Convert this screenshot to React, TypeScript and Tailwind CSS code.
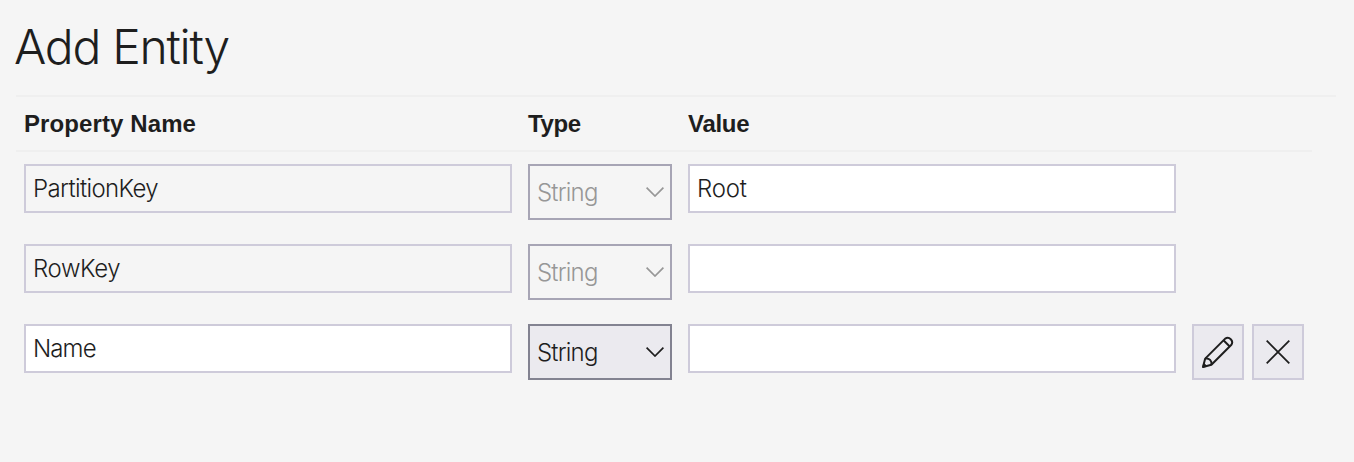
import React from "react";

type Row = { name: string; nameTracking: string; value: string; editable: boolean };

const rows: Row[] = [
  { name: "PartitionKey", nameTracking: "tracking-[-0.62px]", value: "Root", editable: false },
  { name: "RowKey", nameTracking: "tracking-[-0.4px]", value: "", editable: false },
  { name: "Name", nameTracking: "tracking-[-0.9px]", value: "", editable: true },
];

function Field({ text, readOnly, tracking }: { text: string; readOnly?: boolean; tracking: string }) {
  return (
    <div
      className={`flex h-[49px] w-[488px] items-center border-2 border-[#cecbda] px-[7px] ${
        readOnly ? "bg-[#f5f5f5]" : "bg-white"
      }`}
    >
      <span className={tracking}>{text}</span>
    </div>
  );
}

function TypeSelect({ disabled }: { disabled: boolean }) {
  return (
    <div
      className={`flex h-14 w-36 items-center justify-between border-2 pl-[7px] pr-1.5 ${
        disabled ? "border-[#a7a5b5] bg-[#f5f5f5] text-[#979797]" : "border-[#838391] bg-[#ebeaef]"
      }`}
    >
      <span className="pt-0.5 tracking-[-0.8px]">String</span>
      <svg className="h-[10px] w-[18px]" viewBox="0 0 18 10" fill="none" stroke="currentColor" strokeWidth="1.7">
        <path d="M0.6 0.7 9 9 17.4 0.7" />
      </svg>
    </div>
  );
}

function IconButton({ label, children }: { label: string; children: React.ReactNode }) {
  return (
    <button
      aria-label={label}
      className="flex h-14 w-[52px] items-center justify-center border-2 border-[#cecbda] bg-[#ebeaef]"
    >
      {children}
    </button>
  );
}

export default function App() {
  return (
    <main className="h-[462px] w-full bg-[#f5f5f5] pl-4 pt-4 font-['Inter',sans-serif] text-2xl font-light text-[#1e1e1e]">
      <h1 className="-ml-0.5 h-[79px] whitespace-nowrap text-[48px] leading-[62px] tracking-[-1.28px]">Add Entity</h1>
      <section className="w-[1320px] border-t-2 border-[#efefef]">
        <header className="flex h-[55px] w-[1296px] gap-4 border-b-2 border-[#efefef] px-2 leading-[53px] font-['Liberation_Sans',sans-serif] font-bold">
          <div className="w-[488px]">
            <span className="tracking-[0.1px]">Property Name</span>
          </div>
          <div className="w-36">
            <span className="tracking-[-0.4px]">Type</span>
          </div>
          <div>
            <span className="tracking-[-0.3px]">Value</span>
          </div>
        </header>
        <div className="flex flex-col gap-6 px-2 pt-3">
          {rows.map((row) => (
            <div key={row.name} className="flex h-14 items-start gap-4">
              <Field text={row.name} readOnly={!row.editable} tracking={row.nameTracking} />
              <TypeSelect disabled={!row.editable} />
              <Field text={row.value} tracking="tracking-[-0.2px]" />
              {row.editable && (
                <div className="flex gap-2">
                  <IconButton label="Edit">
                    <svg className="h-8 w-8" viewBox="0 0 32 32" fill="none" stroke="currentColor" strokeWidth="2" strokeLinejoin="round">
                      <path d="M1 31 3.2 22.6 23.2 2.6a4.5 4.5 0 0 1 6.2 6.2L9.4 28.8Z" />
                      <path d="M21.5 4.3 27.7 10.5M3.2 22.6c4-.8 7 2.2 6.2 6.2" />
                      <path d="M1.4 30.6 2 28.3 3.7 30Z" fill="currentColor" />
                    </svg>
                  </IconButton>
                  <IconButton label="Remove">
                    <svg className="h-6 w-6" viewBox="0 0 24 24" fill="none" stroke="currentColor" strokeWidth="1.8">
                      <path d="M0.7 0.7 23.3 23.3M23.3 0.7 0.7 23.3" />
                    </svg>
                  </IconButton>
                </div>
              )}
            </div>
          ))}
        </div>
      </section>
    </main>
  );
}
